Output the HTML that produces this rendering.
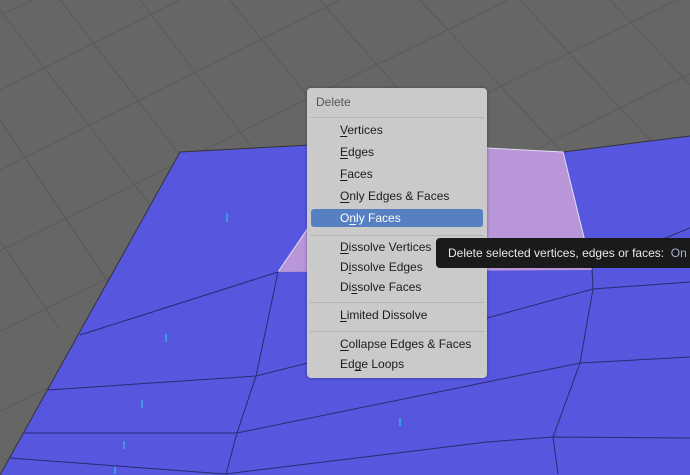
<!DOCTYPE html>
<html><head><style>
html,body{margin:0;width:690px;height:475px;overflow:hidden}
body{background:#666;font-family:"Liberation Sans","DejaVu Sans",sans-serif;position:relative}
svg{position:absolute;left:0;top:0;overflow:hidden}
.menu{position:absolute;left:307px;top:88px;width:180px;height:290px;background:#cacaca;border-radius:4px;box-shadow:0 0 3px rgba(0,0,0,.35)}
.menu .h{position:absolute;left:9px;top:7px;font-size:12px;color:#555}
.it{position:absolute;left:33px;font-size:12px;color:#1c1c1c;white-space:nowrap}
.u{text-decoration:underline;text-decoration-thickness:1px;text-underline-offset:2px}
.sep{position:absolute;left:3px;right:3px;height:1px;background:#b4b4b4}
.hl{position:absolute;left:4px;width:172px;top:121px;height:18px;background:#5680c2;border-radius:3px}
.tip{position:absolute;left:436px;top:238px;width:254px;height:30px;background:#1a1a1c;border-radius:4px 0 0 4px;color:#e8e8e8;font-size:12px;line-height:30px;padding-left:12px;box-sizing:border-box;white-space:nowrap;overflow:hidden}
</style></head><body>
<svg width="690" height="475" viewBox="0 0 690 475">
<g stroke="#5a5a5a" stroke-width="1">
<line x1="-100" y1="60" x2="300" y2="-120"/><line x1="-100" y1="140" x2="400" y2="-110"/><line x1="-100" y1="220" x2="520" y2="-90"/><line x1="-100" y1="300" x2="650" y2="-70"/><line x1="-100" y1="380" x2="800" y2="-60"/><line x1="-100" y1="460" x2="800" y2="20"/><line x1="-100" y1="540" x2="800" y2="100"/>
<line x1="0" y1="10" x2="200" y2="270"/><line x1="60" y1="0" x2="300" y2="310"/><line x1="140" y1="0" x2="330" y2="250"/><line x1="230" y1="0" x2="400" y2="210"/><line x1="320" y1="0" x2="470" y2="170"/><line x1="420" y1="0" x2="560" y2="150"/><line x1="520" y1="0" x2="650" y2="140"/><line x1="610" y1="0" x2="690" y2="85"/><line x1="0" y1="120" x2="120" y2="300"/><line x1="0" y1="240" x2="60" y2="330"/>
</g>
<polygon points="180,152 310,145 487,148 563,152 690,136 690,475 0,475" fill="#5656df"/>
<polyline points="0,475 180,152 310,145 487,148 563,152 690,136" fill="none" stroke="#333"/>
<polygon points="278,272 310,225 310,146 487,148 563,152 592,270" fill="#b896d8"/>
<polyline points="278,272 310,225" stroke="#e8dcf4" fill="none"/>
<polyline points="487,148 563,152 592,270" stroke="#e8dcf4" fill="none"/>
<g stroke="#2a2a70" stroke-width="1" fill="none">
<polyline points="80,335 278,272 256,376 237,433 226,474"/>
<polyline points="48,390 256,376 487,318 593,289 690,282"/>
<polyline points="24,433 237,433 487,382 580,363 690,357"/>
<polyline points="10,458 225,474"/>
<polyline points="225,474 487,442 553,437 690,438"/>
<polyline points="592,268 593,289 580,363 553,437 558,474"/>
<polyline points="592,268 690,228"/>
</g>
<g stroke="#2fc0e8" stroke-width="1.2">
<line x1="227" y1="213" x2="227" y2="222"/><line x1="166" y1="334" x2="166" y2="342"/><line x1="142" y1="400" x2="142" y2="408"/><line x1="124" y1="441" x2="124" y2="449"/><line x1="115" y1="467" x2="115" y2="474"/><line x1="400" y1="418" x2="400" y2="426"/>
</g>
</svg>
<div class="menu">
<div class="h">Delete</div>
<div class="sep" style="top:29px"></div>
<div class="hl"></div>
<div class="it" style="top:35px"><span class="u">V</span>ertices</div>
<div class="it" style="top:57px"><span class="u">E</span>dges</div>
<div class="it" style="top:79px"><span class="u">F</span>aces</div>
<div class="it" style="top:101px"><span class="u">O</span>nly Edges &amp; Faces</div>
<div class="it" style="top:123px;color:#fff">O<span class="u">n</span>ly Faces</div>
<div class="sep" style="top:147px"></div>
<div class="it" style="top:152px"><span class="u">D</span>issolve Vertices</div>
<div class="it" style="top:172px">D<span class="u">i</span>ssolve Edges</div>
<div class="it" style="top:192px">Di<span class="u">s</span>solve Faces</div>
<div class="sep" style="top:214px"></div>
<div class="it" style="top:220px"><span class="u">L</span>imited Dissolve</div>
<div class="sep" style="top:243px"></div>
<div class="it" style="top:249px"><span class="u">C</span>ollapse Edges &amp; Faces</div>
<div class="it" style="top:269px">Ed<span class="u">g</span>e Loops</div>
</div>
<div class="tip">Delete selected vertices, edges or faces:&nbsp; <span style="color:#a9b4d0">On</span></div>
</body></html>
